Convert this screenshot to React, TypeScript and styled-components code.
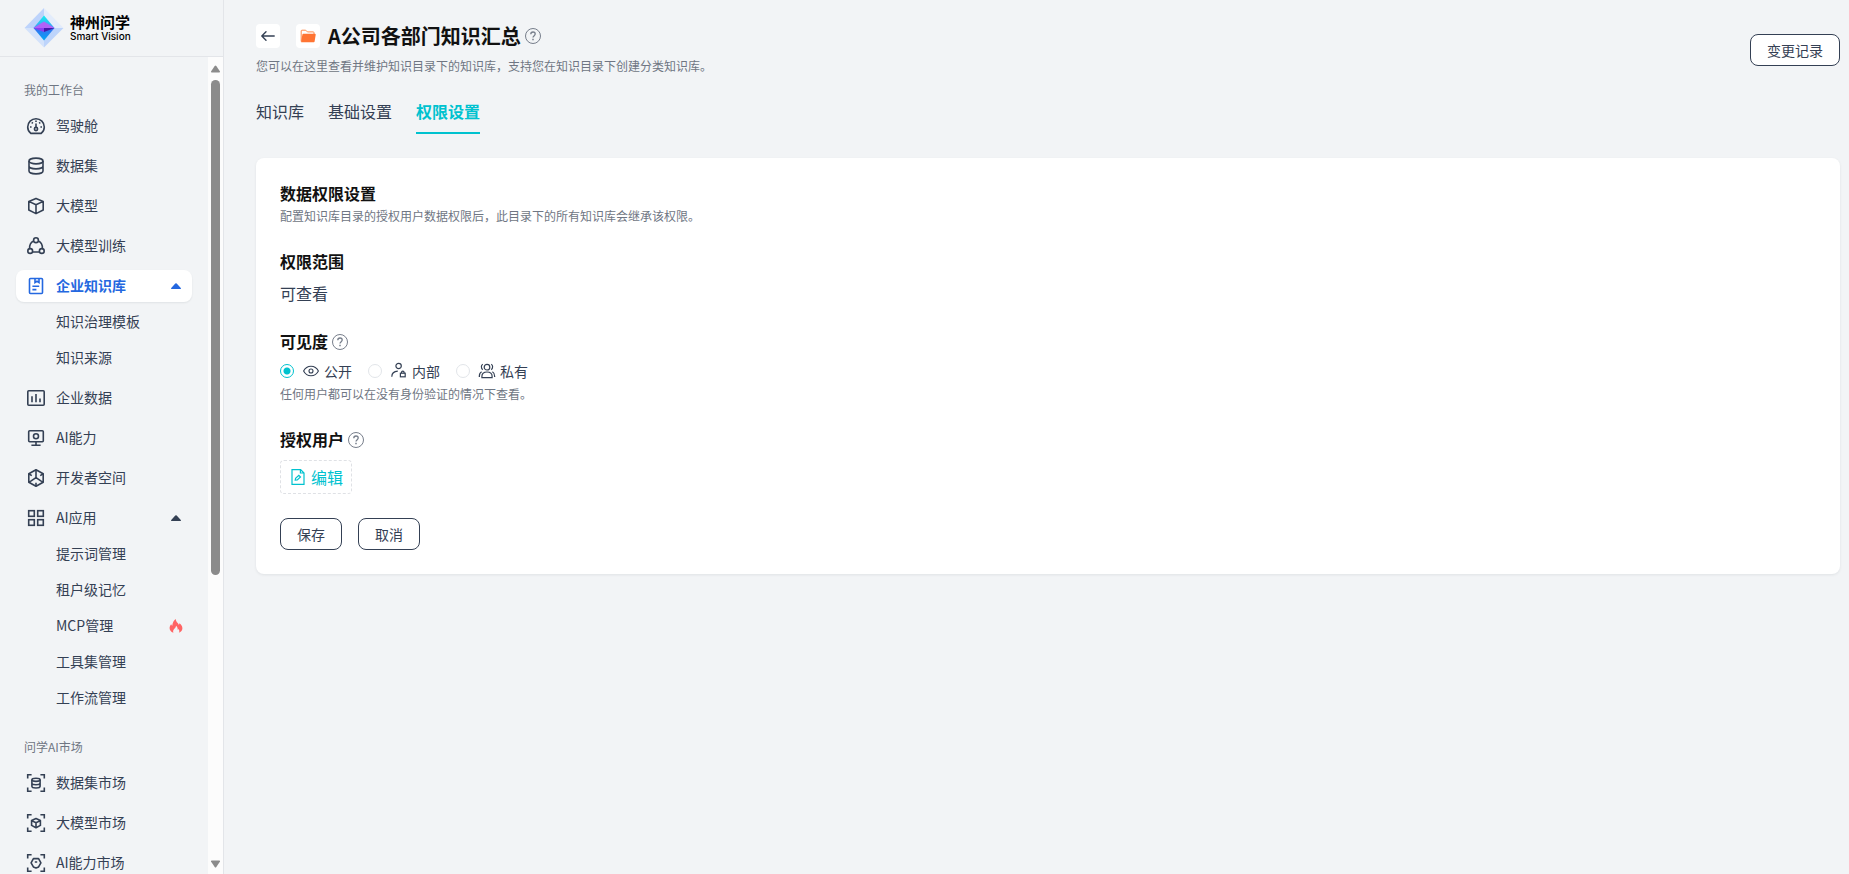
import React from 'react';
import styled, { createGlobalStyle, css } from 'styled-components';

const color = {
  page: '#f2f4f6',
  line: '#e3e5e9',
  ink: '#111111',
  text: '#344054',
  muted: '#6f7683',
  brand: '#00c2cf',
  blue: '#2468e0',
};

const GlobalStyle = createGlobalStyle`
  *, *::before, *::after { box-sizing: border-box; }
  body {
    margin: 0;
    background: ${color.page};
    color: ${color.text};
    font-family: "Noto Sans CJK SC", "Noto Sans", sans-serif;
    font-size: 14px;
    line-height: 20px;
  }
  button, input { font: inherit; color: inherit; margin: 0; }
  h1, h2, h3, p, ul { margin: 0; padding: 0; }
  ul { list-style: none; }
  svg { display: block; flex: none; }
`;

/* ---------- layout ---------- */

const Shell = styled.div`
  display: flex;
  height: 100vh;
`;

const Sidebar = styled.aside`
  display: flex;
  flex-direction: column;
  flex: none;
  width: 224px;
  border-right: 1px solid ${color.line};
`;

const Brand = styled.a`
  display: flex;
  align-items: center;
  gap: 6px;
  flex: none;
  height: 57px;
  padding: 0 24px 1px;
  border-bottom: 1px solid ${color.line};
  color: #000;
  text-decoration: none;
`;

const BrandText = styled.span`
  display: flex;
  flex-direction: column;
`;

const BrandName = styled.span`
  font-size: 15px;
  font-weight: 700;
  line-height: 16px;
`;

const BrandLatin = styled.span`
  font-family: Inter, sans-serif;
  font-size: 10px;
  font-weight: 500;
  line-height: 12px;
`;

const SidebarBody = styled.div`
  display: flex;
  flex: 1;
  min-height: 0;
`;

const Nav = styled.nav`
  flex: 1;
  min-width: 0;
  padding: 0 16px;
  overflow: hidden;
`;

const Scrollbar = styled.div`
  display: flex;
  flex-direction: column;
  align-items: center;
  flex: none;
  width: 15px;
  padding: 8px 0 6px;
  background: #fcfcfc;
`;

const ScrollTrack = styled.div`
  flex: 1;
  width: 9px;
  padding: 7px 0;
`;

const ScrollThumb = styled.div`
  height: 64%;
  border-radius: 5px;
  background: #8b8b8b;
`;

/* ---------- navigation ---------- */

const NavSection = styled.section`
  padding-top: 23px;
`;

const NavHeading = styled.h2`
  margin-bottom: 10px;
  padding: 0 8px;
  color: ${color.muted};
  font-size: 12px;
  font-weight: 400;
  line-height: 20px;
`;

const NavList = styled.ul`
  display: flex;
  flex-direction: column;
  gap: 8px;
`;

const SubList = styled.ul`
  display: flex;
  flex-direction: column;
  gap: 4px;
  padding-top: 4px;
`;

const rowStyle = css`
  display: flex;
  align-items: center;
  width: 100%;
  height: 32px;
  border-radius: 8px;
  color: ${color.text};
  font-size: 14px;
  line-height: 20px;
  text-decoration: none;
  text-align: left;
`;

const NavRow = styled.a<{ $active?: boolean }>`
  ${rowStyle}
  gap: 10px;
  padding: 0 11px 0 10px;
  ${({ $active }) =>
    $active &&
    css`
      background: #fff;
      color: ${color.blue};
      font-weight: 700;
      box-shadow: 0 1px 2px rgba(16, 24, 40, 0.08);
    `}
`;

const SubRow = styled.a`
  ${rowStyle}
  padding: 0 9px 0 40px;
`;

const RowLabel = styled.span`
  flex: 1;
  padding-bottom: 2px;
`;

/* ---------- page ---------- */

const Main = styled.main`
  flex: 1;
  min-width: 0;
  padding: 24px 9px 24px 32px;
  overflow: auto;
`;

const PageHeader = styled.header`
  display: flex;
  align-items: center;
  justify-content: space-between;
`;

const TitleRow = styled.div`
  display: flex;
  align-items: center;
  height: 24px;
  margin-bottom: 8px;
`;

const IconTile = styled.span`
  display: flex;
  align-items: center;
  justify-content: center;
  width: 24px;
  height: 24px;
  margin-right: 8px;
  border-radius: 4px;
  background: #fff;
`;

const BackButton = styled.button`
  display: flex;
  align-items: center;
  justify-content: center;
  width: 24px;
  height: 24px;
  margin-right: 16px;
  padding: 0;
  border: 0;
  border-radius: 4px;
  background: #fff;
`;

const Title = styled.h1`
  margin-right: 4px;
  color: ${color.ink};
  font-size: 20px;
  font-weight: 700;
  line-height: 24px;
`;

const Hint = styled.p`
  color: ${color.muted};
  font-size: 12px;
  line-height: 20px;
`;

const Button = styled.button`
  height: 32px;
  padding: 0 16px;
  border: 1px solid ${color.text};
  border-radius: 8px;
  background: #fff;
  color: ${color.text};
  font-size: 14px;
  line-height: 20px;
`;

const Tabs = styled.nav`
  display: flex;
  gap: 24px;
  margin: 14px 0 24px;
`;

const Tab = styled.a<{ $active?: boolean }>`
  padding: 8px 0;
  border-bottom: 2px solid ${({ $active }) => ($active ? color.brand : 'transparent')};
  color: ${({ $active }) => ($active ? color.brand : color.text)};
  font-size: 16px;
  font-weight: ${({ $active }) => ($active ? 700 : 400)};
  line-height: 26px;
  text-decoration: none;
`;

const Card = styled.form`
  display: flex;
  flex-direction: column;
  gap: 24px;
  padding: 24px;
  border-radius: 8px;
  background: #fff;
  box-shadow: 0 1px 3px rgba(16, 24, 40, 0.08);
`;

const Group = styled.section`
  display: flex;
  flex-direction: column;
  align-items: flex-start;
`;

const GroupTitle = styled.h3`
  display: flex;
  align-items: center;
  gap: 4px;
  color: ${color.ink};
  font-size: 16px;
  font-weight: 700;
  line-height: 22px;

  span { padding-bottom: 2px; }
`;

const Value = styled.p`
  margin: 8px 0 2px;
  font-size: 16px;
  line-height: 22px;
`;

const RadioRow = styled.div`
  display: flex;
  gap: 16px;
  margin: 8px 0 4px;
`;

const RadioLabel = styled.label`
  display: flex;
  align-items: center;
  line-height: 18px;

  svg { margin: 0 4px 0 8px; }
`;

const Radio = styled.input`
  appearance: none;
  width: 14px;
  height: 14px;
  border: 1px solid #e2e5e9;
  border-radius: 50%;
  background: #fff;

  &:checked {
    border-color: ${color.brand};
    background: radial-gradient(circle, ${color.brand} 3px, #fff 4px);
  }
`;

const EditButton = styled.button`
  display: flex;
  align-items: center;
  gap: 4px;
  height: 34px;
  margin-top: 8px;
  padding: 0 8px;
  border: 1px dashed #dfe1e5;
  border-radius: 4px;
  background: #fff;
  color: ${color.brand};
  font-size: 16px;
  line-height: 22px;
`;

const Actions = styled.div`
  display: flex;
  gap: 16px;
`;

/* ---------- icons ---------- */

const marketFrame = <path d="M1.7 5.6V1.7h3.9M14.4 1.7h3.9v3.9M18.3 14.4v3.9h-3.9M5.6 18.3H1.7v-3.9" />;

const glyphs: Record<string, React.ReactNode> = {
  gauge: (
    <>
      <path d="M4.800 17.400C2.900 15.900 1.700 13.600 1.700 11A8.300 8.300 0 0 1 18.300 11C18.300 13.600 17.100 15.900 15.200 17.400Z" strokeLinejoin="round" />
      <circle cx="10" cy="13" r="1.600" />
      <path d="M10 11.400V7.600M10 4.400v1.500M5.800 6.400l1 1M14.200 6.400l-1 1M4 11h1.600M14.400 11H16" />
    </>
  ),
  database: (
    <>
      <ellipse cx="10" cy="5" rx="7" ry="2.900" />
      <path d="M3 5v10c0 1.600 3.100 2.900 7 2.900s7-1.300 7-2.900V5M3 10c0 1.600 3.100 2.900 7 2.900s7-1.300 7-2.900" />
    </>
  ),
  cube: <path d="M10 2.400l7.200 3v8.600L10 17.600 2.800 14V5.400ZM2.800 5.400L10 8.800l7.200-3.400M10 8.800v8.800" strokeLinejoin="round" />,
  training: (
    <>
      <circle cx="10" cy="4.200" r="2.400" />
      <circle cx="4.200" cy="15" r="2.400" />
      <circle cx="15.800" cy="15" r="2.400" />
      <path d="M7.700 5C5 6.200 3.400 9 3.600 12.600M12.300 5C15 6.200 16.600 9 16.400 12.600M6.600 16h6.800" />
    </>
  ),
  book: (
    <>
      <rect x="3.500" y="2.500" width="13" height="15" rx="1" />
      <path d="M9 2.500v4l2-1.200 2 1.200v-4M6.400 10.200h6.800M6.400 13.600h4" />
    </>
  ),
  chart: (
    <>
      <rect x="1.800" y="2.700" width="16.400" height="14.600" rx="1" />
      <path d="M6 8.200v6M10 6v8.200M14 10.600v3.600" />
    </>
  ),
  monitor: (
    <>
      <rect x="2.700" y="2.700" width="14.600" height="11" rx="1" />
      <circle cx="10" cy="8.200" r="2.500" />
      <path d="M10 13.700v3.600M5.400 17.300h9.200" />
    </>
  ),
  space: (
    <>
      <path d="M10 1.700l7.200 4.100v8.400L10 18.300l-7.200-4.100V5.800Z" strokeLinejoin="round" />
      <path d="M10 1.700v7.900M10 9.600l-5.200 3.600M10 9.600l5.200 3.600M10 18.300v-3.500M2.800 5.800l3 1.800M17.200 5.800l-3 1.800M2.800 14.200l2-1M17.200 14.200l-2-1" />
    </>
  ),
  grid: (
    <>
      <rect x="2.700" y="2.700" width="5.600" height="5.600" />
      <rect x="11.700" y="2.700" width="5.600" height="5.600" />
      <rect x="2.700" y="11.700" width="5.600" height="5.600" />
      <rect x="11.700" y="11.700" width="5.600" height="5.600" />
    </>
  ),
  marketData: (
    <>
      {marketFrame}
      <ellipse cx="10" cy="6.800" rx="4.100" ry="1.600" />
      <path d="M5.900 6.800v6.500c0 1 1.800 1.700 4.100 1.700s4.100-.7 4.100-1.700V6.800M5.900 10c0 1 1.800 1.700 4.100 1.700s4.100-.7 4.100-1.700" />
    </>
  ),
  marketModel: (
    <>
      {marketFrame}
      <path d="M10 5.600l4.400 2v4.800L10 14.800l-4.400-2.400V7.600ZM5.600 7.600L10 9.800l4.400-2.200M10 9.800v5" strokeLinejoin="round" />
    </>
  ),
  marketAi: (
    <>
      {marketFrame}
      <path d="M7.400 5.600h5.200l2.300 4.200-2.300 4.100L10 15l-2.600-1.100-2.300-4.100ZM8.800 9h2.400" strokeLinejoin="round" />
    </>
  ),
};

const NavIcon = ({ name }: { name: string }) => (
  <svg width="20" height="20" viewBox="0 0 20 20" fill="none" stroke="currentColor" strokeWidth="1.6" aria-hidden="true">
    {glyphs[name]}
  </svg>
);

const Caret = () => (
  <svg width="10" height="6" viewBox="0 0 10 6" fill="currentColor" aria-hidden="true">
    <path d="M4.300.5a1 1 0 0 1 1.400 0L9.800 5a.5.5 0 0 1-.4.900H.6A.5.5 0 0 1 .2 5Z" />
  </svg>
);

const ScrollArrow = ({ down = false }: { down?: boolean }) => (
  <svg width="9" height="8" viewBox="0 0 9 8" fill="#8b8b8b" aria-hidden="true">
    <path d={down ? 'M0 1.4C0 .6.4.4 1 .4h7c.6 0 1 .2 1 1L5.3 7a1 1 0 0 1-1.6 0Z' : 'M0 6.6c0 .8.4 1 1 1h7c.6 0 1-.2 1-1L5.3 1a1 1 0 0 0-1.6 0Z'} />
  </svg>
);

const FlameIcon = () => (
  <svg width="14" height="14" viewBox="0 0 14 14" fill="#ff6464" aria-hidden="true">
    <path d="M4.4 13.8C1.8 12.9.6 11 .6 9c0-1.400.7-2.700 1.600-3.800.3.8.6 1.200 1.100 1.500C3.400 4 4.800 1.600 6.700.1c.2 1.900.9 2.900 2 3.900.5.5.8 1 1 1.700.5-.3.700-.8.700-1.500C12.200 5.500 13.400 7.200 13.400 9.200c0 2.100-1.300 3.800-3.600 4.600.8-1.300.7-2.800-.2-3.900-.2.500-.5.800-.9.900C8.800 9.100 8.200 7.600 7 6.700c0 1.300-.6 2-1.400 2.800-1.300 1.300-1.900 2.600-1.200 4.300Z" />
  </svg>
);

const LogoMark = () => (
  <svg width="40" height="40" viewBox="0 0 40 40" aria-hidden="true">
    <defs>
      <linearGradient id="coreTop" x1="0" y1="0" x2="0" y2="1">
        <stop offset="0" stopColor="#12f0f0" />
        <stop offset="1" stopColor="#3f9bf5" />
      </linearGradient>
      <linearGradient id="coreBottom" x1="0" y1="0" x2="0" y2="1">
        <stop offset="0" stopColor="#3a6df0" />
        <stop offset="1" stopColor="#00a8f5" />
      </linearGradient>
    </defs>
    <path d="M20 0L.5 20H20Z" fill="#bdd3fb" />
    <path d="M20 0l19.500 20H20Z" fill="#e3ecfb" />
    <path d="M.5 20L20 39.500V20Z" fill="#d3e2fb" />
    <path d="M39.500 20L20 39.500V20Z" fill="#bdd4fb" />
    <path d="M20 7.500L9.500 20H30.500Z" fill="url(#coreTop)" />
    <path d="M9.500 20L20 32.500 30.500 20Z" fill="url(#coreBottom)" />
    <path d="M9.500 20L20 13.500 30.500 20Z" fill="#b062f7" />
    <path d="M9.500 20L20 24V20Z" fill="#8a3ff0" />
    <path d="M20 24L30.500 20H20Z" fill="#4417a8" />
  </svg>
);

const HelpIcon = () => (
  <svg width="16" height="16" viewBox="0 0 16 16" fill="none" stroke="#777e8b" role="img" aria-label="帮助">
    <circle cx="8" cy="8" r="7.500" />
    <path d="M5.800 6.200C5.800 4.900 6.700 4 8 4s2.200.9 2.200 2c0 1.600-2.200 1.700-2.200 3.600" strokeWidth="1.300" />
    <path d="M8 10.800v1.500" strokeWidth="1.500" />
  </svg>
);

const BackArrow = () => (
  <svg width="16" height="16" viewBox="0 0 16 16" fill="none" stroke="#344054" strokeWidth="1.400" strokeLinecap="round" strokeLinejoin="round" aria-hidden="true">
    <path d="M14.200 8H2M6 3.800L1.800 8 6 12.200" />
  </svg>
);

const FolderIcon = () => (
  <svg width="16" height="14" viewBox="0 0 16 14" aria-hidden="true">
    <path d="M1.200 12.500V2a.8.8 0 0 1 .8-.8h3.700l1.700 1.700h5.800a.8.8 0 0 1 .8.800V6" fill="#fff" stroke="#ff8a4c" />
    <path d="M3.200 4.800h11.600a.9.9 0 0 1 .9 1L14.600 12.600a.8.8 0 0 1-.8.700H1.200V12L2.400 5.400a.8.800 0 0 1 .8-.6Z" fill="#ff7433" />
  </svg>
);

const EyeIcon = () => (
  <svg width="18" height="18" viewBox="0 0 18 18" fill="none" stroke="#344054" strokeWidth="1.100" aria-hidden="true">
    <path d="M1.600 9C3.200 5.900 5.800 4.200 9 4.200S14.800 5.900 16.400 9C14.800 12.100 12.200 13.800 9 13.800S3.200 12.100 1.600 9Z" />
    <circle cx="9" cy="9" r="2" />
  </svg>
);

const MemberLockIcon = () => (
  <svg width="18" height="18" viewBox="0 0 18 18" fill="none" stroke="#344054" strokeWidth="1.200" aria-hidden="true">
    <circle cx="8.600" cy="4" r="2.700" />
    <path d="M1.800 14.800c0-3.500 2.300-5.400 6-5.600" />
    <rect x="10.400" y="11.200" width="4.800" height="3.600" />
    <path d="M11.500 11.200v-.8a1.300 1.300 0 0 1 2.600 0v.8" />
  </svg>
);

const MembersIcon = () => (
  <svg width="18" height="18" viewBox="0 0 18 18" fill="none" stroke="#344054" strokeWidth="1.200" aria-hidden="true">
    <circle cx="9" cy="5.200" r="2.800" />
    <path d="M3.900 15.600v-1.400c0-2.500 2-4.200 5.100-4.200s5.100 1.700 5.100 4.200v1.400Z" />
    <path d="M4.800 2.200C2.900 3 2.900 6.600 4.800 7.600M13.200 2.200c1.900.8 1.900 4.400 0 5.400M3.600 9.800c-1.600.9-2.300 2.300-2.300 4.700h.7M14.400 9.800c1.600.9 2.300 2.300 2.300 4.700H16" />
  </svg>
);

const EditFileIcon = () => (
  <svg width="18" height="18" viewBox="0 0 18 18" fill="none" stroke="currentColor" strokeWidth="1.200" aria-hidden="true">
    <path d="M3 1.600h8.600L15 5v11.400H3ZM11.400 1.600V5H15" />
    <path d="M6.200 12.200l.4-2L9.800 7.300l1.700 1.700-3.200 3Z" />
  </svg>
);

/* ---------- content ---------- */

type SubEntry = { label: string; hot?: boolean };
type Entry = { label: string; icon: string; active?: boolean; children?: SubEntry[] };

const sections: { title: string; items: Entry[] }[] = [
  {
    title: '我的工作台',
    items: [
      { label: '驾驶舱', icon: 'gauge' },
      { label: '数据集', icon: 'database' },
      { label: '大模型', icon: 'cube' },
      { label: '大模型训练', icon: 'training' },
      {
        label: '企业知识库',
        icon: 'book',
        active: true,
        children: [{ label: '知识治理模板' }, { label: '知识来源' }],
      },
      { label: '企业数据', icon: 'chart' },
      { label: 'AI能力', icon: 'monitor' },
      { label: '开发者空间', icon: 'space' },
      {
        label: 'AI应用',
        icon: 'grid',
        children: [
          { label: '提示词管理' },
          { label: '租户级记忆' },
          { label: 'MCP管理', hot: true },
          { label: '工具集管理' },
          { label: '工作流管理' },
        ],
      },
    ],
  },
  {
    title: '问学AI市场',
    items: [
      { label: '数据集市场', icon: 'marketData' },
      { label: '大模型市场', icon: 'marketModel' },
      { label: 'AI能力市场', icon: 'marketAi' },
    ],
  },
];

const visibilities = [
  { value: 'public', label: '公开', icon: <EyeIcon /> },
  { value: 'internal', label: '内部', icon: <MemberLockIcon /> },
  { value: 'private', label: '私有', icon: <MembersIcon /> },
];

const tabs = ['知识库', '基础设置', '权限设置'];

export default function App() {
  const [visibility, setVisibility] = React.useState('public');

  return (
    <>
      <GlobalStyle />
      <Shell>
        <Sidebar>
          <Brand href="#">
            <LogoMark />
            <BrandText>
              <BrandName>神州问学</BrandName>
              <BrandLatin>Smart Vision</BrandLatin>
            </BrandText>
          </Brand>
          <SidebarBody>
            <Nav>
              {sections.map((section) => (
                <NavSection key={section.title}>
                  <NavHeading>{section.title}</NavHeading>
                  <NavList>
                    {section.items.map((item) => (
                      <li key={item.label}>
                        <NavRow href="#" $active={item.active}>
                          <NavIcon name={item.icon} />
                          <RowLabel>{item.label}</RowLabel>
                          {item.children && <Caret />}
                        </NavRow>
                        {item.children && (
                          <SubList>
                            {item.children.map((child) => (
                              <li key={child.label}>
                                <SubRow href="#">
                                  <RowLabel>{child.label}</RowLabel>
                                  {child.hot && <FlameIcon />}
                                </SubRow>
                              </li>
                            ))}
                          </SubList>
                        )}
                      </li>
                    ))}
                  </NavList>
                </NavSection>
              ))}
            </Nav>
            <Scrollbar aria-hidden="true">
              <ScrollArrow />
              <ScrollTrack>
                <ScrollThumb />
              </ScrollTrack>
              <ScrollArrow down />
            </Scrollbar>
          </SidebarBody>
        </Sidebar>

        <Main>
          <PageHeader>
            <div>
              <TitleRow>
                <BackButton type="button" aria-label="返回">
                  <BackArrow />
                </BackButton>
                <IconTile>
                  <FolderIcon />
                </IconTile>
                <Title>A公司各部门知识汇总</Title>
                <HelpIcon />
              </TitleRow>
              <Hint>您可以在这里查看并维护知识目录下的知识库，支持您在知识目录下创建分类知识库。</Hint>
            </div>
            <Button type="button">变更记录</Button>
          </PageHeader>

          <Tabs>
            {tabs.map((tab) => (
              <Tab key={tab} href="#" $active={tab === '权限设置'}>
                {tab}
              </Tab>
            ))}
          </Tabs>

          <Card onSubmit={(event) => event.preventDefault()}>
            <Group>
              <GroupTitle>
                <span>数据权限设置</span>
              </GroupTitle>
              <Hint>配置知识库目录的授权用户数据权限后，此目录下的所有知识库会继承该权限。</Hint>
            </Group>
            <Group>
              <GroupTitle>
                <span>权限范围</span>
              </GroupTitle>
              <Value>可查看</Value>
            </Group>
            <Group>
              <GroupTitle>
                <span>可见度</span>
                <HelpIcon />
              </GroupTitle>
              <RadioRow role="radiogroup" aria-label="可见度">
                {visibilities.map((option) => (
                  <RadioLabel key={option.value}>
                    <Radio
                      type="radio"
                      name="visibility"
                      value={option.value}
                      checked={visibility === option.value}
                      onChange={() => setVisibility(option.value)}
                    />
                    {option.icon}
                    {option.label}
                  </RadioLabel>
                ))}
              </RadioRow>
              <Hint>任何用户都可以在没有身份验证的情况下查看。</Hint>
            </Group>
            <Group>
              <GroupTitle>
                <span>授权用户</span>
                <HelpIcon />
              </GroupTitle>
              <EditButton type="button">
                <EditFileIcon />
                编辑
              </EditButton>
            </Group>
            <Actions>
              <Button type="submit">保存</Button>
              <Button type="button">取消</Button>
            </Actions>
          </Card>
        </Main>
      </Shell>
    </>
  );
}
